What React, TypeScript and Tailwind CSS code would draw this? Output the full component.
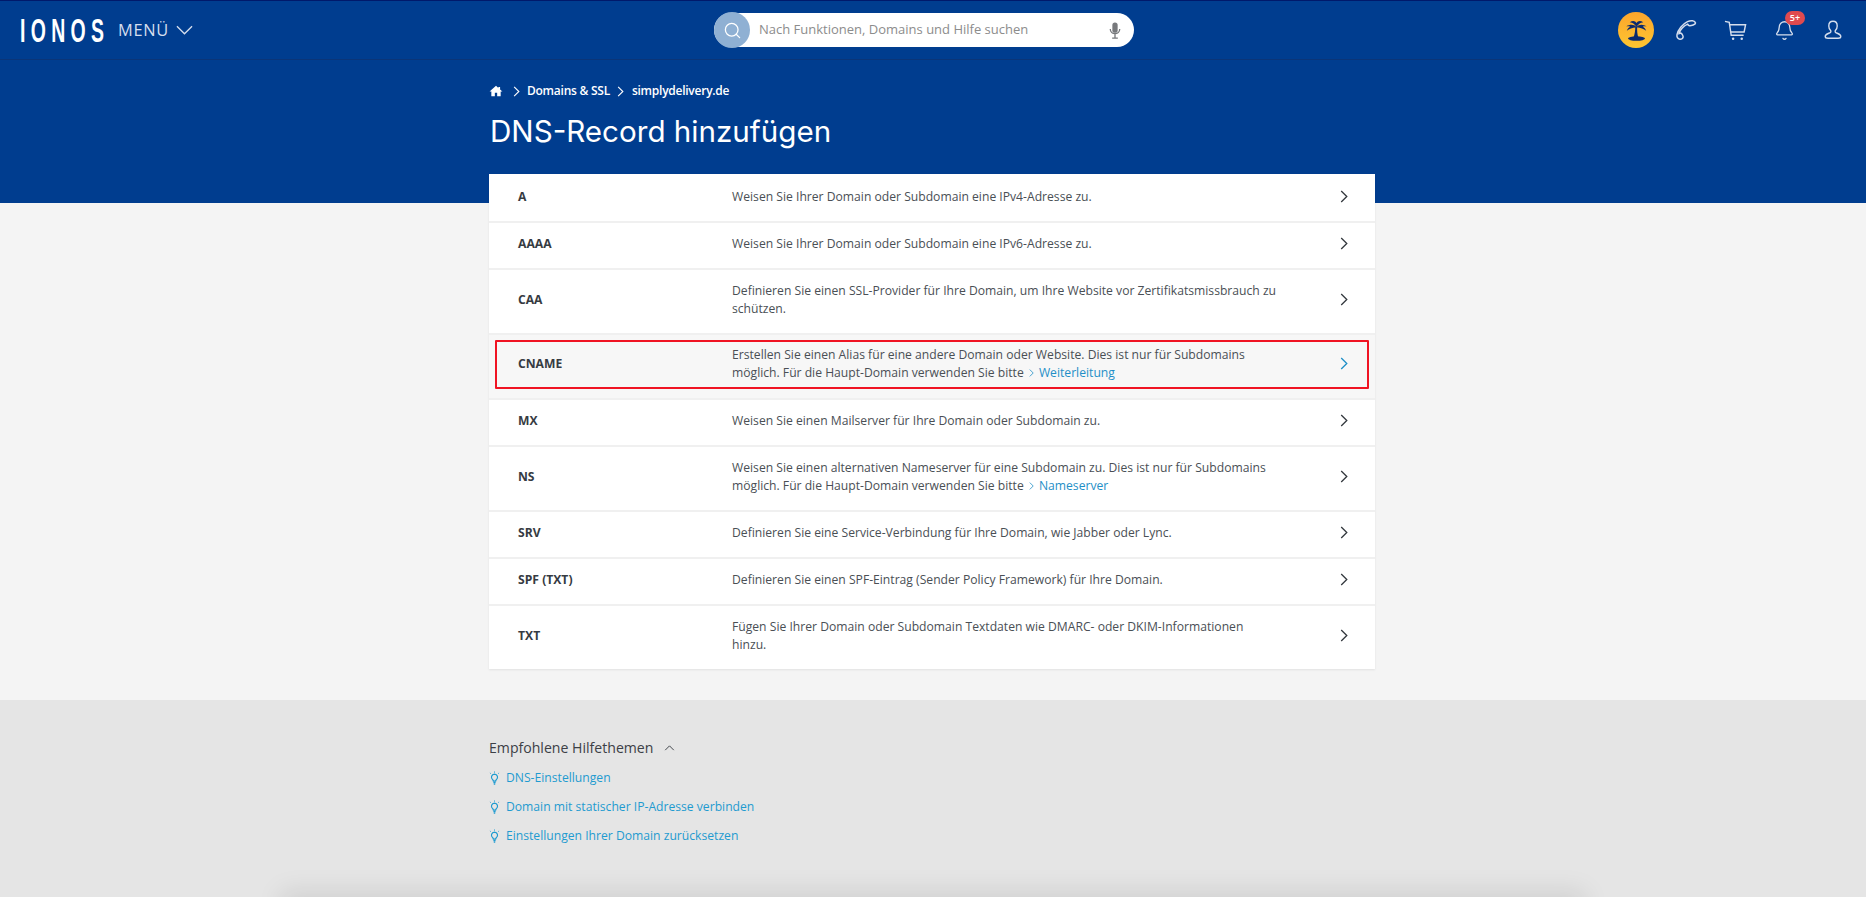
import { Search, Bell } from "lucide-react";

const sans = "font-['Open_Sans',sans-serif]";

type Rec = { name: string; text: string; link?: string; tall?: boolean; active?: boolean };

const RECORDS: Rec[] = [
  { name: "A", text: "Weisen Sie Ihrer Domain oder Subdomain eine IPv4-Adresse zu." },
  { name: "AAAA", text: "Weisen Sie Ihrer Domain oder Subdomain eine IPv6-Adresse zu." },
  {
    name: "CAA",
    text: "Definieren Sie einen SSL-Provider für Ihre Domain, um Ihre Website vor Zertifikatsmissbrauch zu schützen.",
    tall: true,
  },
  {
    name: "CNAME",
    text: "Erstellen Sie einen Alias für eine andere Domain oder Website. Dies ist nur für Subdomains möglich. Für die Haupt-Domain verwenden Sie bitte",
    link: "Weiterleitung",
    tall: true,
    active: true,
  },
  { name: "MX", text: "Weisen Sie einen Mailserver für Ihre Domain oder Subdomain zu." },
  {
    name: "NS",
    text: "Weisen Sie einen alternativen Nameserver für eine Subdomain zu. Dies ist nur für Subdomains möglich. Für die Haupt-Domain verwenden Sie bitte",
    link: "Nameserver",
    tall: true,
  },
  { name: "SRV", text: "Definieren Sie eine Service-Verbindung für Ihre Domain, wie Jabber oder Lync." },
  { name: "SPF (TXT)", text: "Definieren Sie einen SPF-Eintrag (Sender Policy Framework) für Ihre Domain." },
  {
    name: "TXT",
    text: "Fügen Sie Ihrer Domain oder Subdomain Textdaten wie DMARC- oder DKIM-Informationen hinzu.",
    tall: true,
  },
];

const HELP = [
  "DNS-Einstellungen",
  "Domain mit statischer IP-Adresse verbinden",
  "Einstellungen Ihrer Domain zurücksetzen",
];

function Chevron({ className }: { className: string }) {
  return (
    <svg viewBox="0 0 8 14" fill="none" stroke="currentColor" strokeWidth="1.4" className={className}>
      <path d="M1 1l6 6-6 6" />
    </svg>
  );
}

function Bulb() {
  return (
    <svg viewBox="0 0 12 16" fill="none" stroke="currentColor" strokeWidth="1.3" className="h-[15px] w-[11px] text-[#1f9bd0]">
      <path d="M6 3.200a3.400 3.400 0 0 0-2 6.100c.5.400.8.900.8 1.500h2.400c0-.6.300-1.100.8-1.500A3.400 3.400 0 0 0 6 3.200z" />
      <path d="M4.800 12.400h2.400M5.200 14.200h1.600" />
      <path d="M6 .3v1.400M1 1.800l1 1M11 1.800l-1 1" strokeWidth="0.9" />
    </svg>
  );
}

function Palm() {
  return (
    <svg viewBox="0 0 24 24" className="h-[27px] w-[27px] fill-[#0b2a6e]">
      <path d="M10.900 8.800c0 3.400-.5 6.400-1.500 9.400h4.200c-.9-3-1.200-6-1-9.400z" />
      <path d="M12 9C10 6.400 6.400 6.200 3 8.200c1.600-.1 2.600 0 3.400.4-1.400.7-2.400 1.800-3 3.600 2.200-1.800 4.800-2.800 8.600-3.200z" />
      <path d="M12 9c2-2.600 5.600-2.800 9-.8-1.600-.1-2.600 0-3.400.4 1.400.7 2.400 1.800 3 3.600-2.200-1.800-4.800-2.800-8.600-3.200z" />
      <path d="M12 9C10.600 6.400 8.800 5 6 4.600c2.600-1.800 5-1.200 6 .8 1-2 3.400-2.600 6-.8-2.800.4-4.600 1.800-6 4.400z" />
      <ellipse cx="12" cy="19.200" rx="7.600" ry="2" />
    </svg>
  );
}

export default function App() {
  return (
    <div className={`${sans} flex h-[897px] flex-col overflow-hidden bg-[#f4f4f4] text-[12.15px] text-[#4a4f55]`}>
      {/* header */}
      <header className="flex h-[60px] shrink-0 items-center border-t border-b border-t-[#00196b] border-b-[#0b3578] bg-[#003d8f]">
        <div className="flex w-[714px] shrink-0 items-center pl-[20px]">
          <span className="inline-block w-[96px] origin-left scale-x-[0.59] font-['Liberation_Sans',sans-serif] text-[33px] leading-none font-bold tracking-[9px] text-white">
            IONOS
          </span>
          <span className="ml-[2px] text-[16.4px] tracking-[0.7px] text-[#d5deed]">MENÜ</span>
          <svg viewBox="0 0 18 10" fill="none" stroke="#d5deed" strokeWidth="1.4" className="ml-[7px] h-[10px] w-[17px]">
            <path d="M1 1l8 8 8-8" />
          </svg>
        </div>

        <div className="flex h-[34px] w-[420px] items-center rounded-full bg-white">
          <span className="flex h-[36px] w-[36px] shrink-0 items-center justify-center rounded-full bg-[#8fb0d3]">
            <Search size={19} strokeWidth={1.6} className="text-white" />
          </span>
          <span className="ml-[9px] text-[13px] text-[#8c8c8c]">Nach Funktionen, Domains und Hilfe suchen</span>
          <svg viewBox="0 0 12 18" className="mr-[13px] ml-auto h-[17px] w-[12px] text-[#77797c]" fill="none" stroke="currentColor" strokeWidth="1.4">
            <rect x="3.2" y="0.5" width="5.6" height="11" rx="2.8" fill="currentColor" stroke="none" />
            <path d="M1 7.500c0 6.400 10 6.400 10 0M6 13v3.600M3 17h6" />
          </svg>
        </div>

        <div className="ml-auto flex items-center pr-[22px] text-[#d5deed]">
          <span className="flex h-[36px] w-[36px] items-center justify-center rounded-full bg-gradient-to-b from-[#fca52c] to-[#fdc631]">
            <Palm />
          </span>
          <svg viewBox="0 0 24 24" fill="none" stroke="currentColor" strokeWidth="1.5" className="ml-[20px] h-[24px] w-[24px]">
            <path d="M21.500 5c-.6-2.600-4.600-3-8-1.400-5 2.400-9.500 8-10.500 13-.4 2.400.6 4.400 2.800 4.600 1.500.1 3-.9 3.300-2.100.2-1-1-3.400-2-3.800-.8-.3-1.500 0-2 .2.500-2.800 4.500-7.800 8.500-9.400.4.900 1 1.600 1.900 1.600 1.500.1 6.200-1.200 6-2.700z" />
          </svg>
          <svg viewBox="0 0 24 24" fill="none" stroke="currentColor" strokeWidth="1.5" className="ml-[26px] h-[23px] w-[23px]">
            <path d="M1 2.500l4.500 1 2 13.500h13" />
            <path d="M5.800 6H22.500l-1.500 7.500H7" />
            <circle cx="9.500" cy="20.500" r="1.300" fill="currentColor" stroke="none" />
            <circle cx="18.500" cy="20.500" r="1.300" fill="currentColor" stroke="none" />
          </svg>
          <span className="relative ml-[27px] flex">
            <Bell size={21} strokeWidth={1.5} />
            <span className="absolute top-[-9px] left-[11px] flex h-[14px] w-[20px] items-center justify-center rounded-full bg-[#df4a4f] text-[9px] font-semibold text-white">
              5+
            </span>
          </span>
          <svg viewBox="0 0 24 24" fill="none" stroke="currentColor" strokeWidth="1.5" className="ml-[27px] h-[22px] w-[22px]">
            <path d="M12 2.500c-3 0-4.600 2.200-4.600 5 0 2 .8 3.800 2 5 .4.500.4 1.700-.3 2.200-1.300 1-5.600 1.600-5.600 4.300 0 1.600 1.400 2 3 2h11c1.600 0 3-.4 3-2 0-2.700-4.300-3.300-5.600-4.300-.7-.5-.7-1.700-.3-2.200 1.200-1.200 2-3 2-5 0-2.800-1.600-5-4.600-5z" />
          </svg>
        </div>
      </header>

      {/* hero */}
      <section className="h-[143px] shrink-0 bg-[#003d8f] text-white">
        <div className="mx-auto w-[886px]">
          <nav className="mt-[21px] flex h-[20px] items-center text-[12px] leading-none font-semibold tracking-[-0.25px]">
            <svg viewBox="0 0 24 24" className="-ml-px h-[14px] w-[14px] fill-white">
              <path d="M12 3L1 13h3v8h6v-6h4v6h6v-8h3l-4-3.600V5h-3v1.900z" />
            </svg>
            <Chevron className="mr-[7px] ml-[10px] h-[11px] w-[7px]" />
            <span>Domains &amp; SSL</span>
            <Chevron className="mr-[8px] ml-[7px] h-[11px] w-[7px]" />
            <span>simplydelivery.de</span>
          </nav>
          <h1 className="mt-[12px] font-['Inter',sans-serif] text-[29.6px] leading-[36px] font-normal">DNS-Record hinzufügen</h1>
        </div>
      </section>

      {/* record list */}
      <main className="relative ml-[489px] -mt-[29px] w-[886px] shrink-0 bg-white shadow-[0_1px_2px_rgba(0,0,0,0.08)]">
        {RECORDS.map((r, i) => (
          <div
            key={r.name}
            className={`relative flex items-center ${r.tall ? "h-[65px]" : "h-[47px]"} ${i > 0 ? "border-t-2 border-[#f0f0f0]" : ""} ${i === 0 ? "pb-px" : r.active ? "bg-[#f7f7f7] pb-[5px]" : "pb-[3px]"}`}
          >
            <span className="w-[243px] shrink-0 pl-[29px] font-bold text-[#363b42]">{r.name}</span>
            <p className="w-[546px] shrink-0 leading-[18px]">
              {r.text}
              {r.link && (
                <span className="text-[#1f8fc7]">
                  {" "}
                  <Chevron className="mr-[5px] ml-[2px] inline-block h-[8px] w-[5px] align-[0px]" />
                  {r.link}
                </span>
              )}
            </p>
            <Chevron className={`-mt-[2px] ml-[62px] h-[13px] w-[8px] ${r.active ? "text-[#1f8fc7]" : "text-[#33383e]"}`} />
            {r.active && (
              <span className="absolute top-[5px] right-[6px] bottom-[9px] left-[6px] rounded-[1px] border-2 border-[#f01423]" />
            )}
          </div>
        ))}
      </main>

      {/* footer */}
      <footer className="mt-[31px] flex min-h-0 flex-1 flex-col bg-[#e5e5e5]">
        <div className="ml-[489px] w-[886px] pt-[38px]">
          <div className="flex items-center text-[14.1px] leading-[20px] text-[#3c4046]">
            Empfohlene Hilfethemen
            <svg viewBox="0 0 12 7" fill="none" stroke="currentColor" strokeWidth="1.1" className="ml-[11px] h-[6px] w-[11px]">
              <path d="M1 6l5-5 5 5" />
            </svg>
          </div>
          <ul className="mt-[6px]">
            {HELP.map((h) => (
              <li key={h} className="flex h-[29px] items-center text-[#1f9bd0]">
                <Bulb />
                <span className="ml-[6px]">{h}</span>
              </li>
            ))}
          </ul>
        </div>
        <div className="mx-auto mt-auto h-px w-[1280px] translate-y-[8px] shadow-[0_0_26px_12px_rgba(0,0,0,0.1)]" />
      </footer>
    </div>
  );
}
